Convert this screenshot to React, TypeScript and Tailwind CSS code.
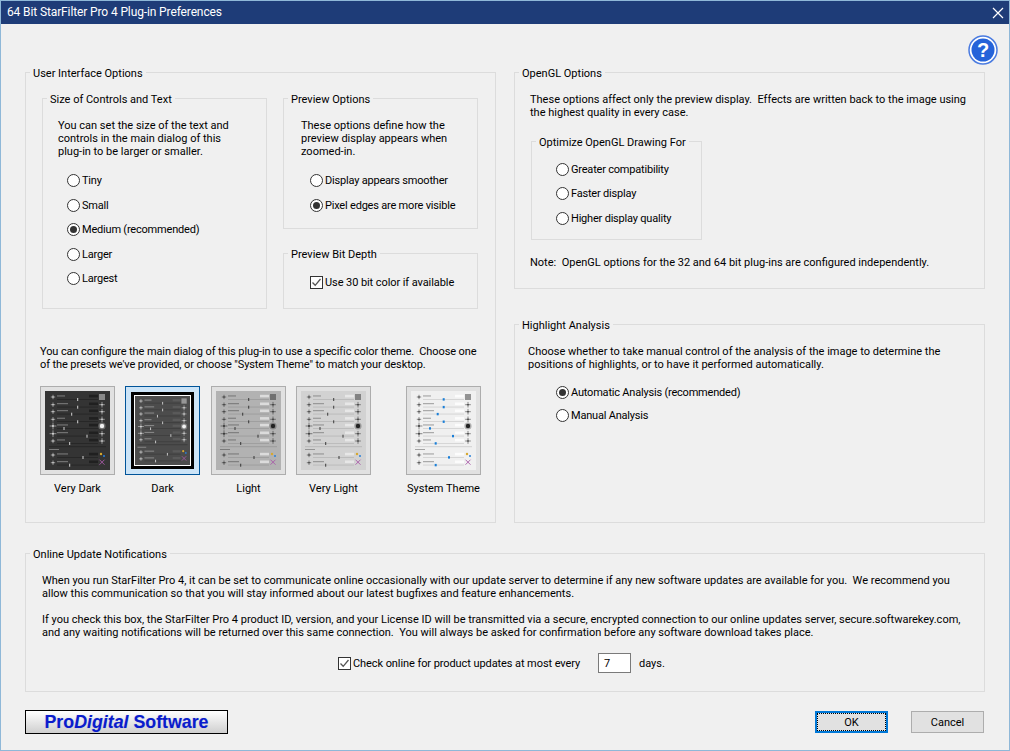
import type { ReactNode } from "react";

function Group({
  title,
  className,
  children,
}: {
  title: string;
  className: string;
  children: ReactNode;
}) {
  return (
    <div className={`relative border border-[#dcdcdc] ${className}`}>
      <span className="absolute -top-[6px] left-[4px] bg-[#f0f0f0] px-[3px] leading-[14px] whitespace-nowrap">
        {title}
      </span>
      {children}
    </div>
  );
}

function Radio({ label, checked = false }: { label: string; checked?: boolean }) {
  return (
    <div className="flex h-[24.5px] items-center gap-[2px]">
      <span className="flex size-[13px] items-center justify-center rounded-full border border-[#333] bg-white">
        {checked && <span className="size-[7px] rounded-full bg-[#333]" />}
      </span>
      <span className="tracking-[-0.2px] whitespace-nowrap">{label}</span>
    </div>
  );
}

function Checkbox({ label }: { label: string }) {
  return (
    <div className="flex items-center gap-[2px]">
      <span className="flex size-[13px] items-center justify-center border border-[#333] bg-white">
        <svg viewBox="0 0 11 11" className="size-[11px]" fill="none" stroke="#555" strokeWidth="1.3">
          <path d="M1.5 5.5 4.2 8.3 9.5 2" />
        </svg>
      </span>
      <span className="tracking-[-0.08px] whitespace-nowrap">{label}</span>
    </div>
  );
}

type Look = { bg: string; fg: string; text: string; track: string; box: string };

const rowY = [5, 12.7, 19.7, 27.3, 34, 41.7, 49, 63, 70.7];
const handleX = [32.7, 32.7, 26.7, 32.7, 19, 42, 24.7, 38, 24.7];

function Star({ x, y, r, color }: { x: number; y: number; r: number; color: string }) {
  return (
    <g stroke={color} strokeWidth="0.6" opacity="0.85">
      <path d={`M${x - r} ${y}H${x + r}M${x} ${y - r}V${y + r}`} />
      <circle cx={x} cy={y} r={r / 3.5} fill={color} stroke="none" />
    </g>
  );
}

function ThemePreview({ look, blueHandle }: { look: Look; blueHandle?: boolean }) {
  return (
    <svg viewBox="0 0 65 79" className="block h-[79px] w-[65px] blur-[0.5px]" style={{ background: look.bg }}>
      {rowY.map((y, i) => (
        <g key={y}>
          <Star x={8} y={y + 1} r={i === 4 || i === 5 ? 3.4 : 2.2} color={look.fg} />
          <rect x={12} y={y - 0.6} width={i % 3 === 0 ? 8 : 11} height={1.1} fill={look.text} opacity="0.5" />
          <rect x={44} y={y - 1.2} width={9} height={2.6} fill={look.box} opacity="0.8" />
          <rect x={12} y={y + 3} width={41} height={0.7} fill={look.track} opacity="0.75" />
          {blueHandle ? (
            <rect x={handleX[i] - 1} y={y + 2.2} width={2} height={2.4} fill="#1a7fd8" />
          ) : (
            <rect x={handleX[i] - 0.5} y={y + 2} width={1} height={3} fill={look.fg} opacity="0.85" />
          )}
          {i === 4 ? (
            <g>
              <circle cx={57} cy={y + 1} r={3.6} fill={look.fg} opacity="0.3" />
              <circle cx={57} cy={y + 1} r={2.2} fill={look.fg} />
            </g>
          ) : i === 0 ? (
            <rect x={54} y={y - 2} width={6} height={6} fill={look.fg} opacity="0.45" />
          ) : i === 7 ? (
            <g>
              <circle cx={56} cy={y} r={1.2} fill="#d8a830" />
              <circle cx={59} cy={y + 2} r={1} fill="#2a80d8" />
            </g>
          ) : i === 8 ? (
            <path d={`M54.5 ${y - 2}L59.5 ${y + 3}M59.5 ${y - 2}L54.5 ${y + 3}`} stroke="#a85aa8" strokeWidth="0.9" />
          ) : (
            <Star x={57} y={y + 1} r={2.8} color={look.fg} />
          )}
        </g>
      ))}
      <rect x={4} y={55.5} width={57} height={0.6} fill={look.track} />
      <rect x={4} y={58} width={10} height={1} fill={look.text} opacity="0.5" />
    </svg>
  );
}

const themes: { name: string; spacing: string; look: Look; selected?: boolean; blueHandle?: boolean }[] = [
  {
    name: "Very Dark",
    spacing: "",
    look: { bg: "#343434", fg: "#f2f2f2", text: "#bdbdbd", track: "#1e1e1e", box: "#1c1c1c" },
  },
  {
    name: "Dark",
    spacing: "ml-[10px]",
    selected: true,
    look: { bg: "#4c4c4c", fg: "#f2f2f2", text: "#cfcfcf", track: "#333333", box: "#5e5e5e" },
  },
  {
    name: "Light",
    spacing: "ml-[11px]",
    look: { bg: "#b2b2b2", fg: "#222222", text: "#444444", track: "#8e8e8e", box: "#e6e6e6" },
  },
  {
    name: "Very Light",
    spacing: "ml-[10px]",
    look: { bg: "#d2d2d2", fg: "#222222", text: "#555555", track: "#a8a8a8", box: "#ececec" },
  },
  {
    name: "System Theme",
    spacing: "ml-[35px]",
    blueHandle: true,
    look: { bg: "#f0f0f0", fg: "#222222", text: "#555555", track: "#bdbdbd", box: "#ffffff" },
  },
];

function ThemeCard({ theme }: { theme: (typeof themes)[number] }) {
  return (
    <div className={`w-[75px] ${theme.spacing}`}>
      {theme.selected ? (
        <div className="flex h-[89px] w-[75px] items-center justify-center border border-[#005499] bg-[#cce4f7]">
          <div className="border-[3px] border-black">
            <div className="border border-white">
              <div className="flex h-[69px] w-[55px] items-center justify-center overflow-hidden">
                <div className="shrink-0 scale-[0.88]">
                  <ThemePreview look={theme.look} />
                </div>
              </div>
            </div>
          </div>
        </div>
      ) : (
        <div className="flex h-[89px] w-[75px] items-center justify-center border border-[#adadad] bg-[#e1e1e1]">
          <ThemePreview look={theme.look} blueHandle={theme.blueHandle} />
        </div>
      )}
      <div className="mt-[7px] text-center leading-[13px] whitespace-nowrap">{theme.name}</div>
    </div>
  );
}

export default function App() {
  return (
    <div className="flex h-[751px] w-[1010px] flex-col overflow-hidden border-x border-b border-[#8fb8d8] bg-[#f0f0f0] font-['Roboto',sans-serif] text-[11px] leading-[13px] text-black">
      {/* title bar */}
      <div className="-mx-px flex h-[24px] shrink-0 items-center justify-between border-t border-[#8fb8d8] bg-[#1e3c78] pr-[6px] pl-[7px] text-[12px] tracking-[-0.12px] text-white">
        <span>64 Bit StarFilter Pro 4 Plug-in Preferences</span>
        <svg viewBox="0 0 12 12" className="size-[12px]" fill="none" stroke="white" strokeWidth="1.2">
          <path d="M1 1 11 11M11 1 1 11" />
        </svg>
      </div>

      {/* help */}
      <div className="flex h-[48px] shrink-0 items-start justify-end pt-[11px] pr-[11px]">
        <svg viewBox="0 0 30 30" className="size-[30px]">
          <circle cx="15" cy="15" r="14" fill="white" stroke="#4a7be0" strokeWidth="1.5" />
          <circle cx="15" cy="15" r="11.5" fill="#2563d9" />
          <text x="15" y="22" textAnchor="middle" fill="white" fontSize="20" fontWeight="700" fontFamily="Liberation Sans">
            ?
          </text>
        </svg>
      </div>

      {/* main columns */}
      <div className="flex h-[451px] shrink-0 pl-[24px]">
        <Group title="User Interface Options" className="h-[451px] w-[471px] px-[16px] pt-[25px]">
          <div className="flex gap-[16px]">
            <Group title="Size of Controls and Text" className="h-[211px] w-[225px] pt-[20px] pl-[15px]">
              <p>
                You can set the size of the text and
                <br />
                controls in the main dialog of this
                <br />
                plug-in to be larger or smaller.
              </p>
              <div className="mt-[10.3px] pl-[9px]">
                <Radio label="Tiny" />
                <Radio label="Small" />
                <Radio label="Medium (recommended)" checked />
                <Radio label="Larger" />
                <Radio label="Largest" />
              </div>
            </Group>
            <div className="flex w-[195px] flex-col gap-[24px]">
              <Group title="Preview Options" className="h-[131px] pt-[20px] pl-[17px]">
                <p>
                  These options define how the
                  <br />
                  preview display appears when
                  <br />
                  zoomed-in.
                </p>
                <div className="mt-[10.3px] pl-[9px]">
                  <Radio label="Display appears smoother" />
                  <Radio label="Pixel edges are more visible" checked />
                </div>
              </Group>
              <Group title="Preview Bit Depth" className="h-[56px] pt-[22px] pl-[26px]">
                <Checkbox label="Use 30 bit color if available" />
              </Group>
            </div>
          </div>
          <p className="mt-[36px] -ml-[2px] tracking-[-0.1px] whitespace-nowrap">
            You can configure the main dialog of this plug-in to use a specific color theme.&nbsp; Choose one
            <br />
            of the presets we've provided, or choose "System Theme" to match your desktop.
          </p>
          <div className="mt-[15px] -ml-[2px] flex">
            {themes.map((t) => (
              <ThemeCard key={t.name} theme={t} />
            ))}
          </div>
        </Group>

        <div className="ml-[18px] flex w-[471px] flex-col gap-[35px]">
          <Group title="OpenGL Options" className="h-[217px] pt-[20px] pl-[15px]">
            <p>
              These options affect only the preview display.&nbsp; Effects are written back to the image using
              <br />
              the highest quality in every case.
            </p>
            <Group title="Optimize OpenGL Drawing For" className="mt-[22px] ml-[1px] h-[99px] w-[171px] pt-[15px] pl-[24px]">
              <Radio label="Greater compatibility" />
              <Radio label="Faster display" />
              <Radio label="Higher display quality" />
            </Group>
            <p className="mt-[16px]">Note:&nbsp; OpenGL options for the 32 and 64 bit plug-ins are configured independently.</p>
          </Group>
          <Group title="Highlight Analysis" className="h-[199px] pt-[20px] pl-[13px]">
            <p>
              Choose whether to take manual control of the analysis of the image to determine the
              <br />
              positions of highlights, or to have it performed automatically.
            </p>
            <div className="mt-[10px] pl-[28px]">
              <div className="flex h-[23px] items-center">
                <Radio label="Automatic Analysis (recommended)" checked />
              </div>
              <div className="flex h-[23px] items-center">
                <Radio label="Manual Analysis" />
              </div>
            </div>
          </Group>
        </div>
      </div>

      {/* online updates */}
      <div className="mt-[30px] shrink-0 pl-[24px]">
        <Group title="Online Update Notifications" className="h-[139px] w-[960px] pt-[20px] pl-[16px]">
          <p className="whitespace-nowrap">
            When you run StarFilter Pro 4, it can be set to communicate online occasionally with our update server to determine if any new software updates are available for you.&nbsp; We recommend you
            <br />
            allow this communication so that you will stay informed about our latest bugfixes and feature enhancements.
          </p>
          <p className="mt-[13px] whitespace-nowrap">
            If you check this box, the StarFilter Pro 4 product ID, version, and your License ID will be transmitted via a secure, encrypted connection to our online updates server, secure.softwarekey.com,
            <br />
            and any waiting notifications will be returned over this same connection.&nbsp; You will always be asked for confirmation before any software download takes place.
          </p>
          <div className="mt-[14px] flex items-center pl-[296px]">
            <div className="w-[260px]">
              <Checkbox label="Check online for product updates at most every" />
            </div>
            <div className="flex h-[20px] w-[33px] items-center border border-[#7a7a7a] bg-white pl-[5px]">7</div>
            <span className="ml-[8px]">days.</span>
          </div>
        </Group>
      </div>

      {/* footer */}
      <div className="mt-[18px] flex shrink-0 items-start pr-[25px] pl-[24px]">
        <div className="flex h-[24px] w-[203px] items-center justify-center border-[1.5px] border-black bg-gradient-to-b from-white to-[#cfcfcf] font-['Liberation_Sans',sans-serif] text-[17.8px] font-bold text-[#0a1ccc] [text-shadow:0_0_1px_rgba(10,28,204,0.25)]">
          Pro<i>Digital</i>&nbsp;Software
        </div>
        <div className="ml-auto flex gap-[23px] pt-[1px]">
          <button className="h-[22px] w-[73px] border-2 border-[#0078d7] bg-[#e1e1e1] outline-1 -outline-offset-3 outline-black outline-dotted">
            OK
          </button>
          <button className="h-[22px] w-[73px] border border-[#adadad] bg-[#e1e1e1]">Cancel</button>
        </div>
      </div>
    </div>
  );
}
